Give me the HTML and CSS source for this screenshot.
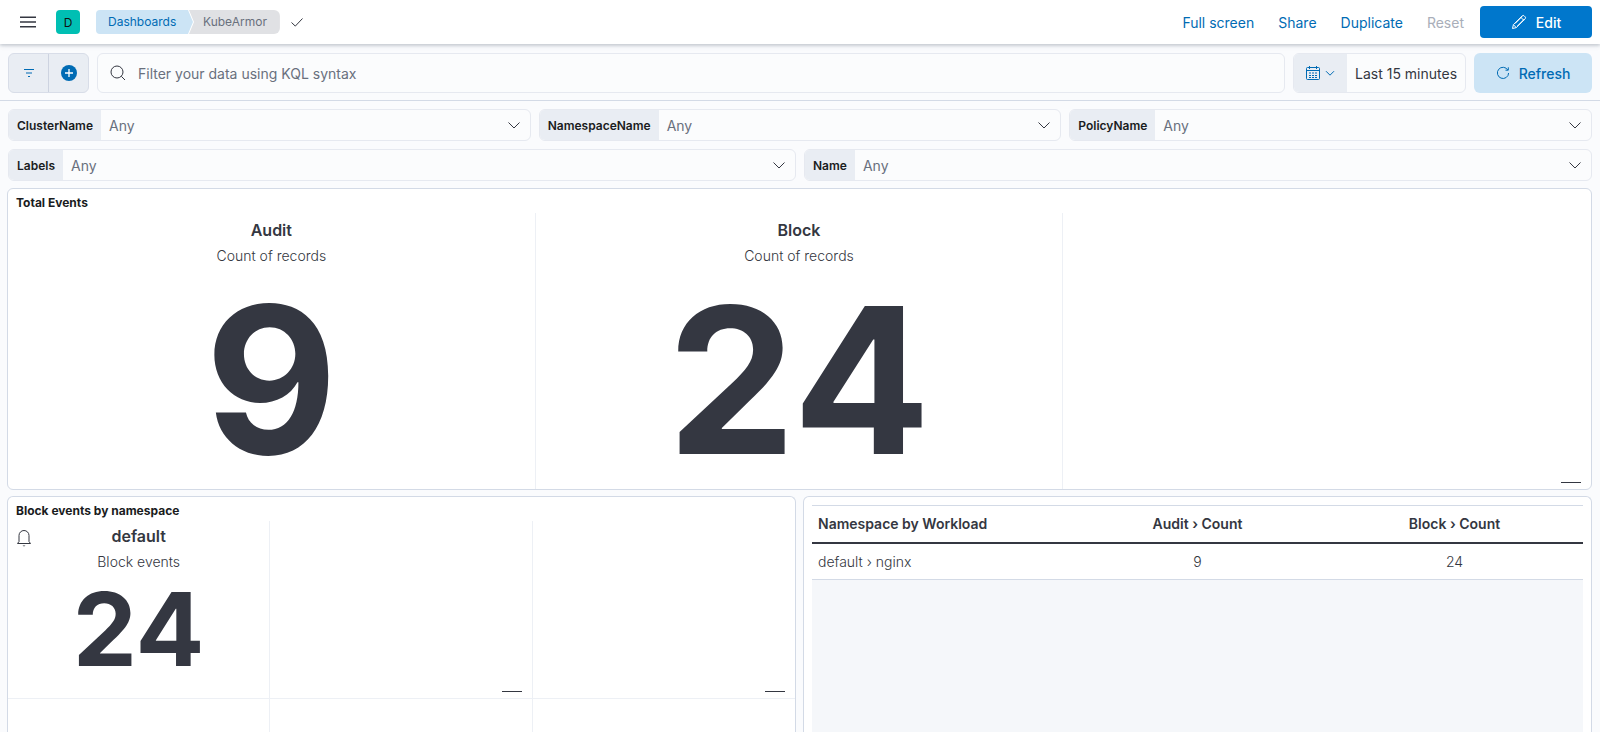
FILE: index.html
```html
<!DOCTYPE html>
<html lang="en">
<head>
<meta charset="utf-8">
<title>KubeArmor - Dashboards</title>
<link rel="stylesheet" href="styles.css">
</head>
<body>
<header class="topbar">
  <button class="menu-btn" aria-label="Menu">
    <svg width="16" height="16" viewBox="0 0 16 16"><path d="M0 2.5h16v1.6H0zM0 7.2h16v1.6H0zM0 11.9h16v1.6H0z" fill="#343741"/></svg>
  </button>
  <div class="space-avatar">D</div>
  <nav class="crumbs">
    <span class="crumb crumb-first">Dashboards</span>
    <span class="crumb crumb-last">KubeArmor</span>
  </nav>
  <svg class="check" width="16" height="16" viewBox="0 0 16 16"><path d="M2.5 8.5l3.8 3.6L13.5 4.5" fill="none" stroke="#343741" stroke-width="1"/></svg>
  <div class="top-actions">
    <a class="link">Full screen</a>
    <a class="link">Share</a>
    <a class="link">Duplicate</a>
    <a class="link link-off">Reset</a>
    <button class="edit-btn">
      <svg width="16" height="16" viewBox="0 0 16 16"><path d="M1.5 14.5l.9-3.8L11.2 1.9a1.4 1.4 0 0 1 2 0l.9.9a1.4 1.4 0 0 1 0 2l-8.8 8.8zM2.4 10.7l2.9 2.9M9.8 3.3l2.9 2.9M4 9.6l7-7M6.4 12l7-7" fill="none" stroke="#fff" stroke-width="1"/></svg>
      <span>Edit</span>
    </button>
  </div>
</header>

<section class="querybar">
  <div class="filter-group">
    <div class="fg-cell">
      <svg width="12" height="10" viewBox="0 0 12 10"><path d="M1 1.5h10M3 5h6M5 8.5h2" stroke="#006bb4" stroke-width="1.2" fill="none"/></svg>
    </div>
    <div class="fg-cell fg-cell-add">
      <svg width="16" height="16" viewBox="0 0 16 16"><circle cx="8" cy="8" r="8" fill="#006bb4"/><path d="M8 4v8M4 8h8" stroke="#fff" stroke-width="1.3"/></svg>
    </div>
  </div>
  <div class="search">
    <svg width="16" height="16" viewBox="0 0 16 16"><circle cx="7" cy="7" r="6" fill="none" stroke="#343741" stroke-width="1"/><path d="M11.3 11.3l3.7 3.7" stroke="#343741" stroke-width="1"/></svg>
    <span>Filter your data using KQL syntax</span>
  </div>
  <div class="datepick">
    <div class="date-btn">
      <svg width="16" height="16" viewBox="0 0 16 16"><rect x="1.5" y="2.5" width="13" height="12" rx="1" fill="none" stroke="#006bb4"/><path d="M1.5 5.5h13M4.5 1v3M11.5 1v3" stroke="#006bb4" fill="none"/><path d="M4 7.5h2v1H4zM7 7.5h2v1H7zM10 7.5h2v1h-2zM4 10h2v1H4zM7 10h2v1H7zM10 10h2v1h-2zM4 12h2v1H4zM7 12h2v1H7zM10 12h2v1h-2z" fill="#006bb4"/></svg>
      <svg width="12" height="12" viewBox="0 0 12 12"><path d="M2 4.2l4 4 4-4" fill="none" stroke="#006bb4"/></svg>
    </div>
    <div class="date-val">Last 15 minutes</div>
  </div>
  <button class="refresh-btn">
    <svg width="14" height="14" viewBox="0 0 14 14"><path d="M11.8 4A5.6 5.6 0 1 0 12.6 7" fill="none" stroke="#006bb4"/><path d="M9.5 4.2h2.8V1.3" fill="none" stroke="#006bb4"/></svg>
    <span>Refresh</span>
  </button>
</section>

<section class="controls">
  <div class="control-row row-three">
    <div class="control"><label>ClusterName</label><span class="any">Any</span><svg class="chev" width="14" height="14" viewBox="0 0 14 14"><path d="M1.5 4.5L7 10l5.5-5.5" fill="none" stroke="#343741"/></svg></div>
    <div class="control"><label>NamespaceName</label><span class="any">Any</span><svg class="chev" width="14" height="14" viewBox="0 0 14 14"><path d="M1.5 4.5L7 10l5.5-5.5" fill="none" stroke="#343741"/></svg></div>
    <div class="control"><label>PolicyName</label><span class="any">Any</span><svg class="chev" width="14" height="14" viewBox="0 0 14 14"><path d="M1.5 4.5L7 10l5.5-5.5" fill="none" stroke="#343741"/></svg></div>
  </div>
  <div class="control-row row-two">
    <div class="control"><label>Labels</label><span class="any">Any</span><svg class="chev" width="14" height="14" viewBox="0 0 14 14"><path d="M1.5 4.5L7 10l5.5-5.5" fill="none" stroke="#343741"/></svg></div>
    <div class="control"><label>Name</label><span class="any">Any</span><svg class="chev" width="14" height="14" viewBox="0 0 14 14"><path d="M1.5 4.5L7 10l5.5-5.5" fill="none" stroke="#343741"/></svg></div>
  </div>
</section>

<main class="dash">
  <section class="panel panel-total">
    <h2 class="panel-title">Total Events</h2>
    <div class="metrics metrics-large">
      <div class="metric"><h3>Audit</h3><p>Count of records</p><div class="value">9</div></div>
      <div class="metric"><h3>Block</h3><p>Count of records</p><div class="value">24</div></div>
      <div class="metric metric-empty"><i class="dash-mark"></i></div>
    </div>
  </section>
  <div class="lower">
    <section class="panel panel-ns">
      <h2 class="panel-title">Block events by namespace</h2>
      <div class="metrics metrics-small">
        <div class="metric">
          <svg class="bell" width="16" height="18" viewBox="0 0 16 18"><path d="M3 12.5V6.5a5 5 0 0 1 10 0v6l1.5 2h-13z" fill="none" stroke="#343741"/><path d="M6.5 16.5h3l-1.5 1z" fill="#343741"/></svg>
          <h3>default</h3><p>Block events</p><div class="value">24</div>
        </div>
        <div class="metric metric-empty"><i class="dash-mark"></i></div>
        <div class="metric metric-empty"><i class="dash-mark"></i></div>
        <div class="metric metric-blank"></div>
        <div class="metric metric-blank"></div>
        <div class="metric metric-blank"></div>
      </div>
    </section>
    <section class="panel panel-table">
      <table class="dt">
        <thead><tr><th>Namespace by Workload</th><th>Audit › Count</th><th>Block › Count</th></tr></thead>
        <tbody><tr><td>default › nginx</td><td>9</td><td>24</td></tr></tbody>
      </table>
      <div class="dt-fill"></div>
    </section>
  </div>
</main>
</body>
</html>
```

FILE: styles.css
```css
* { box-sizing: border-box; }
html, body { height: 100%; }
body {
  margin: 0;
  height: 732px;
  overflow: hidden;
  background: #fafbfd;
  color: #343741;
  font-family: Inter, "Liberation Sans", sans-serif;
  font-size: 14px;
  display: flex;
  flex-direction: column;
}
button { font-family: inherit; border: 0; }

.topbar {
  flex: none;
  height: 44px;
  background: #fff;
  box-shadow: 0 1px 5px rgba(65, 78, 101, .25), 0 2px 2px rgba(65, 78, 101, .1);
  display: flex;
  align-items: center;
  padding-left: 20px;
  position: relative;
  z-index: 2;
}
.menu-btn { background: none; padding: 0; width: 16px; height: 16px; display: flex; }
.space-avatar {
  width: 24px; height: 24px; margin-left: 20px;
  background: #00bfb3; border-radius: 4px;
  display: flex; align-items: center; justify-content: center;
  font-size: 12px; color: #111;
}
.crumbs { display: flex; margin-left: 16px; font-size: 12px; }
.crumb { height: 24px; line-height: 24px; display: block; }
.crumb-first {
  background: #cce4f5; color: #006bb4;
  padding: 0 16px 0 12px; border-radius: 4px 0 0 4px;
  clip-path: polygon(0 0, calc(100% - 5px) 0, 100% 50%, calc(100% - 5px) 100%, 0 100%);
  width: 97px;
}
.crumb-last {
  background: #e0e1e4; color: #69707d;
  padding: 0 13px 0 14px; border-radius: 0 6px 6px 0;
  margin-left: -4px;
  clip-path: polygon(0 0, 100% 0, 100% 100%, 0 100%, 5px 50%);
}
.check { margin-left: 9px; }
.top-actions { margin-left: auto; display: flex; align-items: center; padding-right: 8px; }
.link { color: #006bb4; font-size: 14px; margin-right: 24px; }
.link-off { color: #a9aeb9; margin-right: 16px; }
.edit-btn {
  width: 112px; height: 32px; background: #0077cc; color: #fff;
  border-radius: 4px; display: flex; align-items: center; justify-content: center;
  gap: 9px; font-size: 14px; font-weight: 500;
}

.querybar {
  flex: none;
  height: 57px;
  padding: 9px 8px 8px;
  display: flex;
  gap: 8px;
  border-bottom: 1px solid #d3dae6;
}
.filter-group {
  width: 81px; height: 40px; display: flex;
  background: #e9edf3; border: 1px solid #d8dde8; border-radius: 6px;
}
.fg-cell { flex: 1; display: flex; align-items: center; justify-content: center; }
.fg-cell-add { border-left: 1px solid #cdd3e0; }
.search {
  flex: 1; height: 40px; display: flex; align-items: center; gap: 12px;
  padding-left: 12px; background: #fbfcfd; border: 1px solid #e6e9f0; border-radius: 6px;
  color: #69707d; font-size: 14px;
}
.datepick {
  width: 173px; height: 40px; display: flex;
  border: 1px solid #e6e9f0; border-radius: 6px; background: #fbfcfd; overflow: hidden;
}
.date-btn { width: 53px; background: #e9edf3; display: flex; align-items: center; justify-content: center; gap: 3px; }
.date-val { flex: 1; display: flex; align-items: center; padding-left: 8px; font-size: 14px; white-space: nowrap; }
.refresh-btn {
  width: 118px; height: 40px; background: #cce4f5; color: #006bb4; border-radius: 6px;
  display: flex; align-items: center; justify-content: center; gap: 9px; font-size: 14px; font-weight: 500;
}

.controls { flex: none; padding: 8px 8px 0; display: flex; flex-direction: column; gap: 8px; }
.control-row { display: grid; gap: 8px; }
.row-three { grid-template-columns: 1fr 1fr 1fr; }
.row-two { grid-template-columns: 1fr 1fr; }
.control {
  height: 32px; display: flex; align-items: center; overflow: hidden;
  background: #fbfcfd; border: 1px solid #e6e9f0; border-radius: 6px;
}
.control label {
  align-self: stretch; display: flex; align-items: center;
  padding: 0 8px; background: #e9edf3; font-size: 12px; font-weight: 600; color: #1a1c21;
}
.any { margin-left: 8px; color: #69707d; font-size: 14px; }
.chev { margin-left: auto; margin-right: 9px; }

.dash { flex: 1; min-height: 0; padding: 7px 8px 0 7px; display: flex; flex-direction: column; gap: 6px; }
.panel { background: #fff; border: 1px solid #d3dae6; border-radius: 6px; overflow: hidden; }
.panel-title { margin: 0; padding: 6px 8px 0; height: 24px; font-size: 12px; line-height: 15px; font-weight: 700; color: #1a1c21; }
.panel-total { flex: none; height: 302px; display: flex; flex-direction: column; }
.metrics { display: grid; grid-template-columns: repeat(3, 1fr); }
.metrics-large { flex: 1; min-height: 0; }
.metric { border-right: 1px solid #edf0f5; text-align: center; position: relative; }
.metric:nth-child(3n) { border-right: 0; }
.metric h3 { margin: 0; font-size: 16px; line-height: 20px; font-weight: 600; }
.metric p { margin: 0; font-size: 14px; line-height: 20px; font-weight: 300; }
.metrics-large h3 { padding-top: 7px; }
.metrics-large p { margin-top: 6px; }
.metrics-large .value { font-size: 204px; line-height: 204px; font-weight: 700; margin-top: 12px; }
.dash-mark { position: absolute; right: 10px; bottom: 6px; width: 20px; height: 1px; background: #343741; }

.lower { flex: 1; min-height: 0; display: grid; grid-template-columns: 1fr 1fr; gap: 7px; }
.panel-ns { display: flex; flex-direction: column; border-bottom: 0; border-radius: 6px 6px 0 0; }
.metrics-small { flex: 1; grid-template-rows: 178px 1fr; }
.metrics-small .metric { border-bottom: 1px solid #edf0f5; }
.metrics-small .metric-blank { border-bottom: 0; }
.metrics-small h3 { padding-top: 5px; }
.metrics-small p { margin-top: 6px; }
.metrics-small .value { font-size: 102px; line-height: 102px; font-weight: 700; margin-top: 6px; }
.bell { position: absolute; left: 8px; top: 8px; }

.panel-table { padding: 8px 8px 0; display: flex; flex-direction: column; border-bottom: 0; border-radius: 6px 6px 0 0; }
.dt { width: 100%; border-collapse: collapse; table-layout: fixed; border-top: 1px solid #d3dae6; }
.dt th { height: 37px; font-size: 14px; font-weight: 600; border-bottom: 2px solid #343741; }
.dt td { height: 37px; font-size: 14px; font-weight: 300; border-bottom: 1px solid #d3dae6; }
.dt th, .dt td { text-align: center; padding: 0 6px; }
.dt th:first-child, .dt td:first-child { text-align: left; }
.dt-fill { flex: 1; background: #f5f7fa; }
```
